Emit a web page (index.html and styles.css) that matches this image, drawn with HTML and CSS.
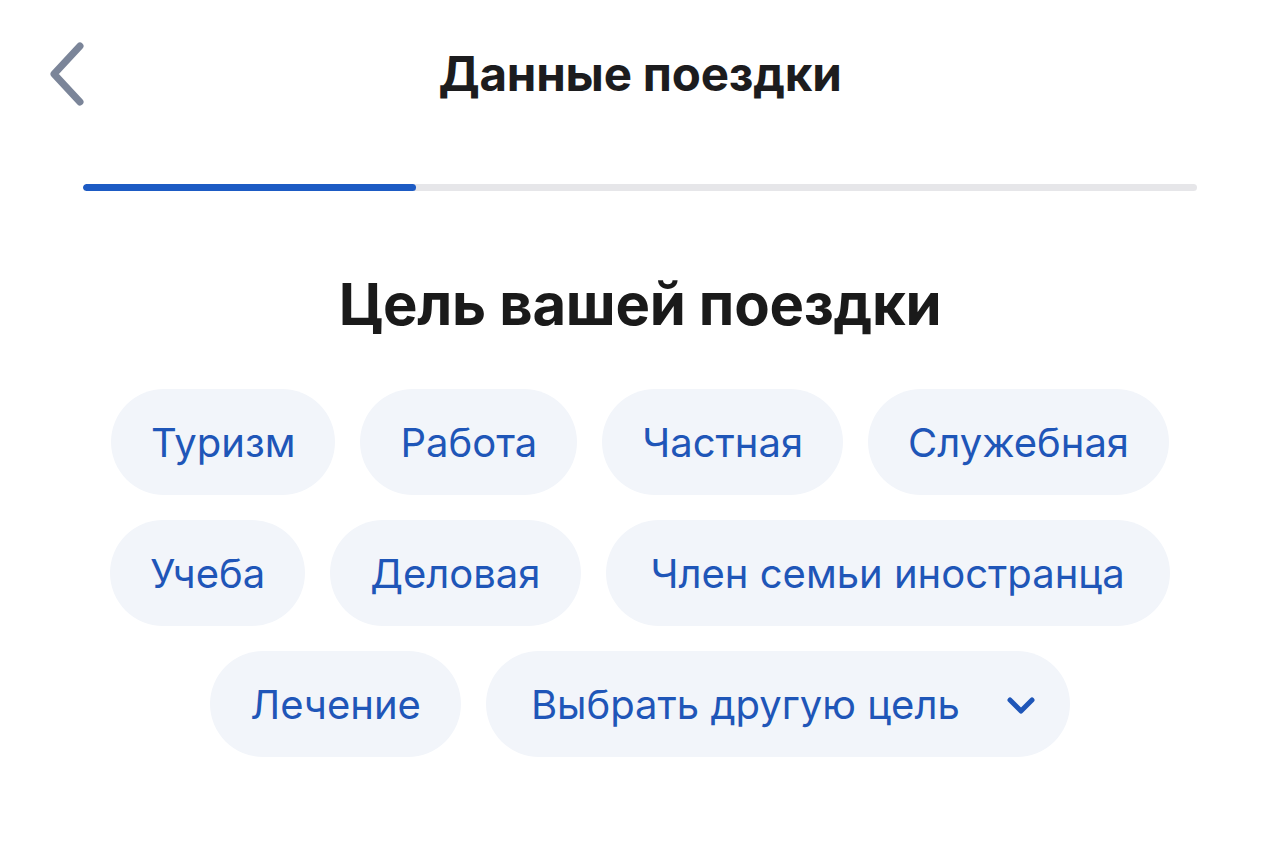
FILE: index.html
```html
<!DOCTYPE html>
<html lang="ru">
<head>
<meta charset="utf-8">
<title>Данные поездки</title>
<link rel="stylesheet" href="styles.css">
</head>
<body>
<div class="screen">
  <header class="topbar">
    <div class="topbar-left">
      <button class="back" aria-label="Назад">
        <svg width="40" height="64" viewBox="0 0 40 64" fill="none">
          <path d="M34 4 L8 32 L34 60" stroke="#7b8599" stroke-width="7" stroke-linecap="round" stroke-linejoin="round"/>
        </svg>
      </button>
    </div>
    <h1 class="title">Данные поездки</h1>
    <div class="topbar-right"></div>
  </header>
  <div class="progress"><div class="progress-fill"></div></div>
  <h2 class="heading">Цель вашей поездки</h2>
  <div class="chips">
    <div class="chip-row">
      <button class="chip">Туризм</button>
      <button class="chip">Работа</button>
      <button class="chip">Частная</button>
      <button class="chip">Служебная</button>
    </div>
    <div class="chip-row">
      <button class="chip">Учеба</button>
      <button class="chip">Деловая</button>
      <button class="chip chip-wide">Член семьи иностранца</button>
    </div>
    <div class="chip-row">
      <button class="chip">Лечение</button>
      <button class="chip chip-select">Выбрать другую цель
        <svg class="caret" width="30" height="20" viewBox="0 0 30 20" fill="none">
          <path d="M4 5 L15 16 L26 5" stroke="#1f56b8" stroke-width="5" stroke-linecap="round" stroke-linejoin="round"/>
        </svg>
      </button>
    </div>
  </div>
</div>
</body>
</html>
```
FILE: styles.css
```css
* { box-sizing: border-box; }
html, body { margin: 0; padding: 0; background: #ffffff; }
body { font-family: Inter, "Noto Sans", sans-serif; }
.screen { width: 1280px; height: 851px; overflow: hidden; }
.topbar {
  display: grid;
  grid-template-columns: 1fr auto 1fr;
  align-items: center;
  height: 150px;
}
.topbar-left { padding-left: 46px; display: flex; align-items: center; }
.back {
  border: 0; background: none; padding: 0; margin: 0;
  width: 44px; height: 70px;
  display: flex; align-items: center; justify-content: flex-start;
  margin-top: -2px;
}
.title {
  margin: 0 0 4px 0;
  text-align: center;
  font-size: 47.5px;
  font-weight: 700;
  color: #1c1c1e;
  letter-spacing: -0.2px;
}
.progress {
  margin: 34px 83px 0 83px;
  height: 7px;
  border-radius: 4px;
  background: #e6e6e9;
  overflow: hidden;
}
.progress-fill {
  width: 333px;
  height: 100%;
  border-radius: 4px;
  background: #1d5bc4;
}
.heading {
  margin: 78px 0 0 0;
  text-align: center;
  font-size: 58px;
  font-weight: 700;
  color: #1a1a1a;
  line-height: 70px;
  letter-spacing: -0.3px;
}
.chips {
  margin-top: 50px;
  display: flex;
  flex-direction: column;
  align-items: center;
  gap: 25px;
}
.chip-row {
  display: flex;
  gap: 25px;
  justify-content: center;
}
.chip {
  height: 106px;
  border: 0;
  border-radius: 53px;
  background: #f2f5fa;
  color: #1f56b8;
  font-family: Inter, "Noto Sans", sans-serif;
  font-size: 40px;
  font-weight: 400;
  padding: 0 40px;
  display: flex;
  align-items: center;
  white-space: nowrap;
}
.chip-wide { padding: 0 45px; }
.chip-select { gap: 46px; padding-right: 34px; padding-left: 45px; }
.caret { margin-top: 2px; }
```
